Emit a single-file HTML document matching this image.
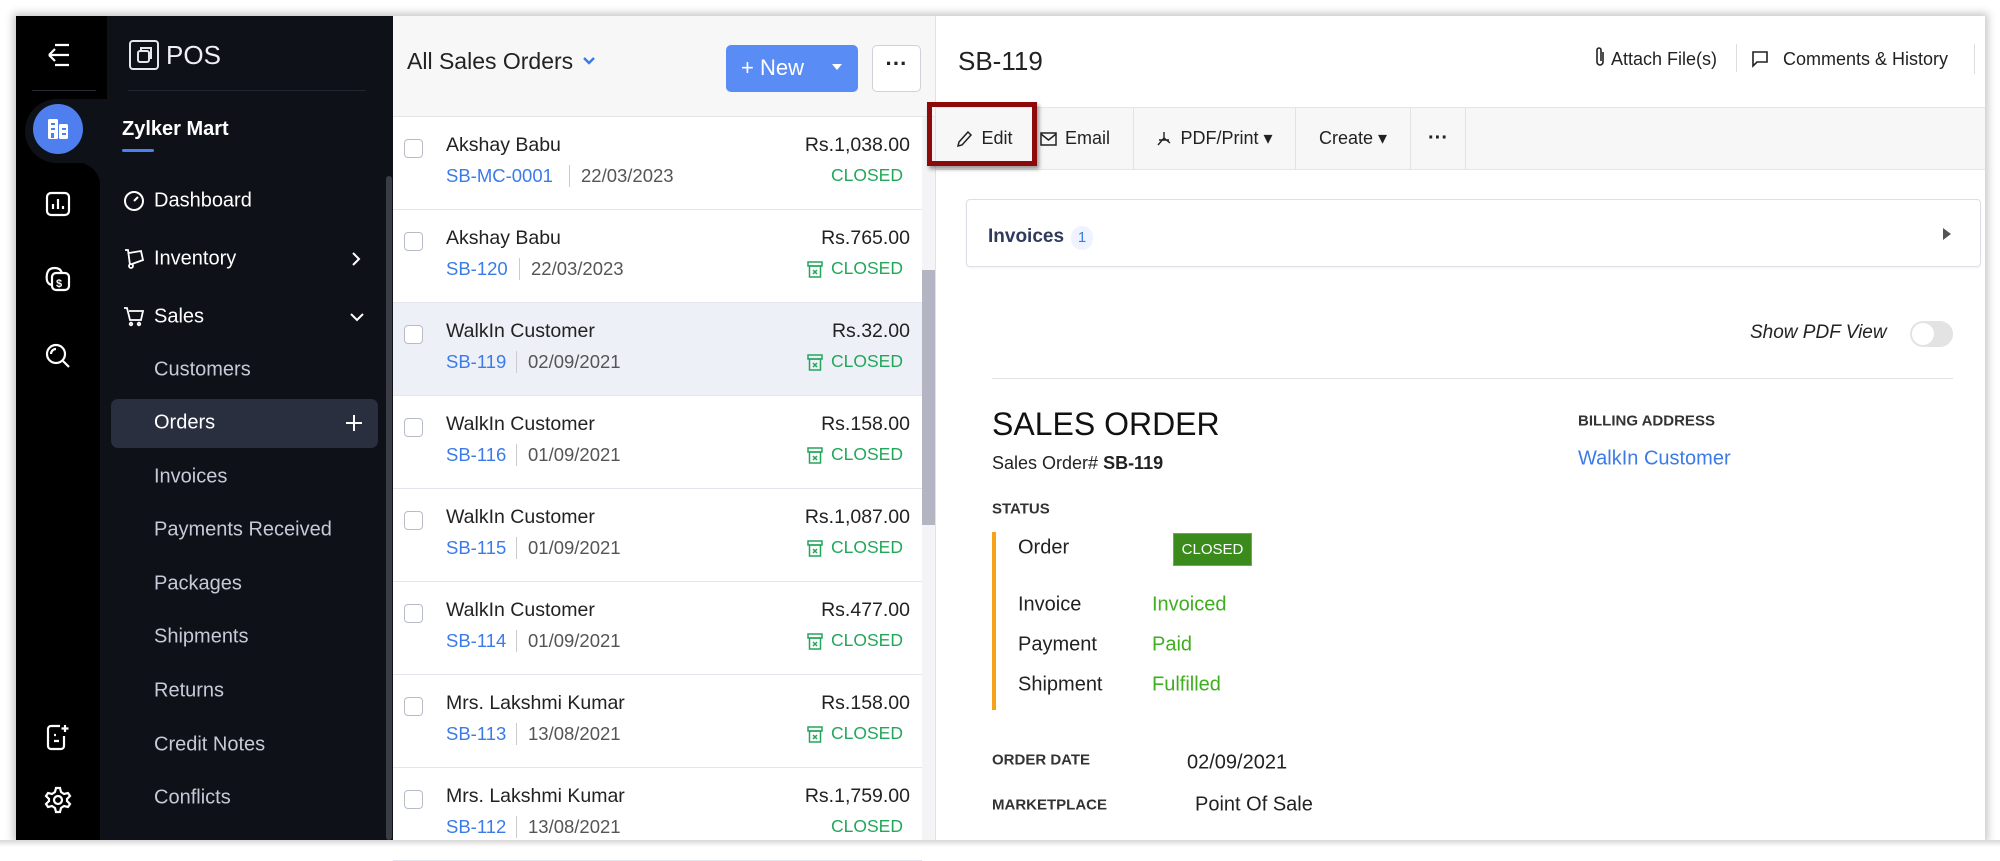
<!DOCTYPE html>
<html><head><meta charset="utf-8"><style>
*{box-sizing:border-box;margin:0;padding:0}
body{width:2000px;height:857px;background:#fff;font-family:"Liberation Sans",sans-serif;position:relative;overflow:hidden}
.a{position:absolute}
#frame{left:16px;top:16px;width:1969px;height:824px;box-shadow:0 0 8px 3px rgba(0,0,0,.22);overflow:hidden;background:#fff}
.nav{color:#c6cad6;font-size:20px;position:absolute;left:154px;transform:translateY(-50%)}
.ri{position:absolute;stroke:#fff;fill:none;stroke-width:2.2}
.row{position:absolute;left:393px;width:529px;height:93px;border-bottom:1px solid #e4e6ee;background:#fff}
.row .cb{position:absolute;left:11px;top:22px;width:19px;height:19px;border:1.5px solid #b8bcc8;border-radius:4px;background:#fff}
.row .nm{position:absolute;left:53px;top:17px;font-size:19.5px;color:#222}
.row .amt{position:absolute;right:12px;top:17px;font-size:19.5px;color:#222}
.row .id{position:absolute;left:53px;top:48px;font-size:18.5px;color:#3b7be8}
.row .dt{position:absolute;top:48px;font-size:18.5px;color:#555;border-left:1px solid #ccc;padding-left:11px;line-height:22px}
.row .st{position:absolute;right:19px;top:48px;font-size:17.5px;color:#22a75a;display:flex;align-items:center;gap:8px}
.tb{position:absolute;top:107px;height:63px;display:flex;align-items:center;font-size:18px;color:#222;border-right:1px solid #e3e3e3}
.lbl{position:absolute;font-size:15px;color:#333;font-weight:bold;transform:translateY(-50%)}
.v{position:absolute;font-size:20px;color:#222;transform:translateY(-50%)}
</style></head><body>
<div id="frame" class="a"></div>
<!-- rail -->
<div class="a" style="left:16px;top:16px;width:84px;height:824px;background:#000"></div>
<div class="a" style="left:100px;top:16px;width:293px;height:824px;background:#0e1118"></div>
<div class="a" style="left:16px;top:16px;width:91px;height:84px;background:#000"></div>
<div class="a" style="left:32px;top:90px;width:64px;height:1px;background:#2a2d35"></div>
<div class="a" style="left:128px;top:90px;width:238px;height:1px;background:#22262f"></div>
<div class="a" style="left:25px;top:99px;width:100px;height:64px;background:#0e1118;border-radius:32px 0 0 32px"></div>
<div class="a" style="left:84px;top:150px;width:16px;height:30px;background:#0e1118"></div>
<div class="a" style="left:16px;top:163px;width:84px;height:40px;background:#000;border-top-right-radius:22px"></div>
<div class="a" style="left:33px;top:104px;width:50px;height:50px;border-radius:50%;background:#4f7fef"></div>
<svg class="a" style="left:43px;top:114px" width="30" height="30" viewBox="0 0 30 30"><rect x="5" y="5" width="10" height="20" rx="1.5" fill="#fff"/><rect x="16" y="10" width="9" height="15" rx="1.5" fill="#fff"/><rect x="8" y="9" width="4" height="2" fill="#4f7fef"/><rect x="8" y="14" width="4" height="2" fill="#4f7fef"/><rect x="8" y="19" width="3" height="5" fill="#4f7fef"/><rect x="19" y="14" width="4" height="2" fill="#4f7fef"/><rect x="19" y="19" width="4" height="2" fill="#4f7fef"/></svg>
<svg class="ri" style="left:46px;top:42px" width="26" height="26" viewBox="0 0 26 26" stroke="#a8adbb" stroke-width="1.8"><path d="M9 3h14M9 23h14M13 13h10M3 13l6-6M3 13l6 6M3 13h10"/></svg>
<svg class="ri" style="left:45px;top:191px" width="26" height="26" viewBox="0 0 26 26"><rect x="2" y="2" width="22" height="22" rx="4"/><path d="M8 18v-5M13 18V8M18 18v-3"/></svg>
<svg class="ri" style="left:44px;top:265px" width="28" height="28" viewBox="0 0 28 28"><rect x="8" y="8" width="17" height="17" rx="4"/><path d="M8 20c-5-1-6-5-5-11 1-4 3-6 8-6 4 0 6 2 7 5"/><text x="12" y="22" font-size="11" fill="#fff" stroke="none" font-family="Liberation Sans" font-weight="bold">$</text></svg>
<svg class="ri" style="left:44px;top:342px" width="28" height="28" viewBox="0 0 28 28"><circle cx="12" cy="12" r="9"/><path d="M19 19l6 6M7 12a5 5 0 0 1 5-5"/></svg>
<svg class="ri" style="left:45px;top:723px" width="26" height="28" viewBox="0 0 26 28"><path d="M15 3H6a3 3 0 0 0-3 3v17a3 3 0 0 0 3 3h10a3 3 0 0 0 3-3V13M9 12h2M9 18h5M20 2v7M16.5 5.5h7"/></svg>
<svg class="ri" style="left:44px;top:786px" width="28" height="28" viewBox="0 0 28 28"><circle cx="14" cy="14" r="4"/><path d="M12 2h4l1 4 3 2 4-1 2 3-3 3v2l3 3-2 3-4-1-3 2-1 4h-4l-1-4-3-2-4 1-2-3 3-3v-2L2 10l2-3 4 1 3-2z"/></svg>
<!-- nav -->
<svg class="a" style="left:128px;top:39px" width="32" height="32" viewBox="0 0 32 32" fill="none" stroke="#e5e7ee" stroke-width="2"><rect x="2" y="2" width="28" height="28" rx="3"/><rect x="10" y="12" width="11" height="11" rx="2"/><path d="M13 12V9h10v10h-2"/></svg>
<div class="a" style="left:166px;top:40px;font-size:26px;color:#eef0f4">POS</div>
<div class="a" style="left:122px;top:118px;font-size:20px;font-weight:bold;color:#fff">Zylker Mart</div>
<div class="a" style="left:122px;top:149px;width:32px;height:3px;background:#4f7fef;border-radius:2px"></div>
<svg class="a" style="left:123px;top:190px" width="22" height="22" viewBox="0 0 22 22" fill="none" stroke="#fff" stroke-width="2"><circle cx="11" cy="11" r="9"/><path d="M11 11l4-4"/></svg>
<div class="nav" style="top:201px;color:#fff">Dashboard</div>
<svg class="a" style="left:123px;top:247px" width="22" height="22" viewBox="0 0 22 22" fill="none" stroke="#fff" stroke-width="1.8"><path d="M2 3h3l2 15M6 6l12-2 2 9-11 4"/><circle cx="8" cy="19" r="2"/></svg>
<div class="nav" style="top:259px;color:#fff">Inventory</div>
<svg class="a" style="left:349px;top:250px" width="14" height="18" viewBox="0 0 14 18" fill="none" stroke="#fff" stroke-width="2"><path d="M4 3l6 6-6 6"/></svg>
<svg class="a" style="left:123px;top:305px" width="22" height="22" viewBox="0 0 22 22" fill="none" stroke="#fff" stroke-width="1.8"><path d="M1 3h3l3 12h11l2-9H6"/><circle cx="8" cy="19" r="1.3"/><circle cx="16" cy="19" r="1.3"/></svg>
<div class="nav" style="top:317px;color:#fff">Sales</div>
<svg class="a" style="left:348px;top:310px" width="18" height="14" viewBox="0 0 18 14" fill="none" stroke="#fff" stroke-width="2"><path d="M3 4l6 6 6-6"/></svg>
<div class="nav" style="top:370px">Customers</div>
<div class="a" style="left:111px;top:399px;width:267px;height:49px;background:#2a2f3f;border-radius:7px"></div>
<div class="nav" style="top:423px;color:#fff">Orders</div>
<svg class="a" style="left:345px;top:414px" width="18" height="18" viewBox="0 0 18 18" stroke="#fff" stroke-width="2"><path d="M9 1v16M1 9h16"/></svg>
<div class="nav" style="top:477px">Invoices</div>
<div class="nav" style="top:530px">Payments Received</div>
<div class="nav" style="top:584px">Packages</div>
<div class="nav" style="top:637px">Shipments</div>
<div class="nav" style="top:691px">Returns</div>
<div class="nav" style="top:745px">Credit Notes</div>
<div class="nav" style="top:798px">Conflicts</div>
<div class="a" style="left:386px;top:176px;width:6px;height:664px;background:#3a3d45;border-radius:3px"></div>
<!-- list -->
<div class="a" style="left:393px;top:16px;width:542px;height:101px;background:#f7f7f7;border-bottom:1px solid #e6e6e6;box-shadow:0 2px 3px rgba(0,0,0,.05)"></div>
<div class="a" style="left:407px;top:48px;font-size:23px;color:#222">All Sales Orders</div>
<svg class="a" style="left:582px;top:56px" width="14" height="10" viewBox="0 0 14 10" fill="none" stroke="#3b7be8" stroke-width="2.4"><path d="M2 2l5 5 5-5"/></svg>
<div class="a" style="left:726px;top:45px;width:132px;height:47px;background:#5a8cf5;border-radius:5px"></div>
<div class="a" style="left:741px;top:55px;font-size:22px;color:#fff">+ New</div>
<svg class="a" style="left:831px;top:63px" width="12" height="8" viewBox="0 0 12 8"><path d="M1 1h10L6 7z" fill="#fff"/></svg>
<div class="a" style="left:872px;top:45px;width:49px;height:47px;background:#fff;border:1px solid #cfd2d8;border-radius:5px;font-size:22px;font-weight:bold;text-align:center;line-height:36px;color:#222">···</div>
<div class="a" style="left:922px;top:117px;width:13px;height:723px;background:#f4f4f6"></div>
<div class="a" style="left:922px;top:270px;width:13px;height:255px;background:#b4b5c2"></div>

<div class="row" style="top:117px"><div class="cb"></div><div class="nm">Akshay Babu</div><div class="amt">Rs.1,038.00</div><div class="id">SB-MC-0001</div><div class="dt" style="left:176px">22/03/2023</div><div class="st">CLOSED</div></div>
<div class="row" style="top:210px"><div class="cb"></div><div class="nm">Akshay Babu</div><div class="amt">Rs.765.00</div><div class="id">SB-120</div><div class="dt" style="left:126px">22/03/2023</div><div class="st"><svg width="16" height="18" viewBox="0 0 16 18" fill="none" stroke="#22a75a" stroke-width="1.5"><rect x="1" y="2" width="14" height="4"/><rect x="2.5" y="6" width="11" height="11"/><path d="M6 10l4 4M10 10l-4 4"/></svg>CLOSED</div></div>
<div class="row" style="top:303px;background:#eef0f8"><div class="cb"></div><div class="nm">WalkIn Customer</div><div class="amt">Rs.32.00</div><div class="id">SB-119</div><div class="dt" style="left:123px">02/09/2021</div><div class="st"><svg width="16" height="18" viewBox="0 0 16 18" fill="none" stroke="#22a75a" stroke-width="1.5"><rect x="1" y="2" width="14" height="4"/><rect x="2.5" y="6" width="11" height="11"/><path d="M6 10l4 4M10 10l-4 4"/></svg>CLOSED</div></div>
<div class="row" style="top:396px"><div class="cb"></div><div class="nm">WalkIn Customer</div><div class="amt">Rs.158.00</div><div class="id">SB-116</div><div class="dt" style="left:123px">01/09/2021</div><div class="st"><svg width="16" height="18" viewBox="0 0 16 18" fill="none" stroke="#22a75a" stroke-width="1.5"><rect x="1" y="2" width="14" height="4"/><rect x="2.5" y="6" width="11" height="11"/><path d="M6 10l4 4M10 10l-4 4"/></svg>CLOSED</div></div>
<div class="row" style="top:489px"><div class="cb"></div><div class="nm">WalkIn Customer</div><div class="amt">Rs.1,087.00</div><div class="id">SB-115</div><div class="dt" style="left:123px">01/09/2021</div><div class="st"><svg width="16" height="18" viewBox="0 0 16 18" fill="none" stroke="#22a75a" stroke-width="1.5"><rect x="1" y="2" width="14" height="4"/><rect x="2.5" y="6" width="11" height="11"/><path d="M6 10l4 4M10 10l-4 4"/></svg>CLOSED</div></div>
<div class="row" style="top:582px"><div class="cb"></div><div class="nm">WalkIn Customer</div><div class="amt">Rs.477.00</div><div class="id">SB-114</div><div class="dt" style="left:123px">01/09/2021</div><div class="st"><svg width="16" height="18" viewBox="0 0 16 18" fill="none" stroke="#22a75a" stroke-width="1.5"><rect x="1" y="2" width="14" height="4"/><rect x="2.5" y="6" width="11" height="11"/><path d="M6 10l4 4M10 10l-4 4"/></svg>CLOSED</div></div>
<div class="row" style="top:675px"><div class="cb"></div><div class="nm">Mrs. Lakshmi Kumar</div><div class="amt">Rs.158.00</div><div class="id">SB-113</div><div class="dt" style="left:123px">13/08/2021</div><div class="st"><svg width="16" height="18" viewBox="0 0 16 18" fill="none" stroke="#22a75a" stroke-width="1.5"><rect x="1" y="2" width="14" height="4"/><rect x="2.5" y="6" width="11" height="11"/><path d="M6 10l4 4M10 10l-4 4"/></svg>CLOSED</div></div>
<div class="row" style="top:768px"><div class="cb"></div><div class="nm">Mrs. Lakshmi Kumar</div><div class="amt">Rs.1,759.00</div><div class="id">SB-112</div><div class="dt" style="left:123px">13/08/2021</div><div class="st">CLOSED</div></div>
<div class="a" style="left:935px;top:16px;width:1px;height:824px;background:#e2e2e2"></div>
<!-- detail -->
<div class="a" style="left:958px;top:46px;font-size:26px;color:#222">SB-119</div>
<svg class="a" style="left:1594px;top:46px" width="12" height="22" viewBox="0 0 12 22" fill="none" stroke="#222" stroke-width="1.6"><path d="M9 6v10a3 3 0 0 1-6 0V4a2 2 0 0 1 4 0v11"/></svg>
<div class="a" style="left:1611px;top:49px;font-size:18px;color:#222">Attach File(s)</div>
<div class="a" style="left:1736px;top:44px;width:1px;height:28px;background:#ddd"></div>
<svg class="a" style="left:1751px;top:50px" width="18" height="18" viewBox="0 0 18 18" fill="none" stroke="#222" stroke-width="1.6"><path d="M2 2h14v10H6l-4 4z"/></svg>
<div class="a" style="left:1783px;top:49px;font-size:18px;color:#222">Comments &amp; History</div>
<div class="a" style="left:1974px;top:44px;width:1px;height:30px;background:#ddd"></div>
<div class="a" style="left:936px;top:107px;width:1049px;height:63px;background:#f7f7f7;border-top:1px solid #e6e6e6;border-bottom:1px solid #e6e6e6"></div>
<div class="tb" style="left:937px;width:96px;justify-content:center;gap:8px;border:none"><svg width="16" height="18" viewBox="0 0 16 18" fill="none" stroke="#222" stroke-width="1.5"><path d="M11 2l3 3-9 10-4 1 1-4z"/></svg>Edit</div>
<div class="tb" style="left:1040px;width:94px;gap:8px"><svg width="17" height="14" viewBox="0 0 17 14" fill="none" stroke="#222" stroke-width="1.5"><rect x="1" y="1" width="15" height="12"/><path d="M1 2l7.5 6L16 2"/></svg>Email</div>
<div class="tb" style="left:1134px;width:162px;justify-content:center;gap:8px"><svg width="16" height="16" viewBox="0 0 16 16" fill="none" stroke="#222" stroke-width="1.4"><path d="M8 1v6l-6 7M8 7l6 5M3 9h10"/></svg>PDF/Print ▾</div>
<div class="tb" style="left:1296px;width:115px;justify-content:center">Create ▾</div>
<div class="tb" style="left:1411px;width:55px;justify-content:center;font-weight:bold;font-size:20px">···</div>
<div class="a" style="left:927px;top:102px;width:110px;height:64px;border:5px solid #8c0a0a;box-shadow:2px 3px 4px rgba(0,0,0,.4)"></div>
<div class="a" style="left:966px;top:199px;width:1015px;height:68px;border:1px solid #dcdfe5;border-radius:4px;box-shadow:0 1px 2px rgba(0,0,0,.06)"></div>
<div class="a" style="left:988px;top:226px;font-size:19px;color:#2f3a5c;font-weight:bold">Invoices</div>
<div class="a" style="left:1071px;top:226px;width:22px;height:24px;border-radius:11px;background:#eef3ff;color:#3b7be8;font-size:15px;text-align:center;line-height:24px">1</div>
<svg class="a" style="left:1942px;top:227px" width="10" height="14" viewBox="0 0 10 14"><path d="M1 1l8 6-8 6z" fill="#555"/></svg>
<div class="a" style="left:1750px;top:322px;font-size:19px;color:#222;font-style:italic">Show PDF View</div>
<div class="a" style="left:1910px;top:321px;width:43px;height:26px;border-radius:13px;background:#e3e3e3"></div>
<div class="a" style="left:1912px;top:323px;width:22px;height:22px;border-radius:50%;background:#fff"></div>
<div class="a" style="left:992px;top:378px;width:961px;height:1px;background:#e2e2e2"></div>
<div class="a" style="left:992px;top:406px;font-size:32px;color:#111">SALES ORDER</div>
<div class="a" style="left:992px;top:453px;font-size:18px;color:#222">Sales Order# <b>SB-119</b></div>
<div class="lbl" style="left:1578px;top:421px">BILLING ADDRESS</div>
<div class="v" style="left:1578px;top:459px;color:#3b7be8">WalkIn Customer</div>
<div class="lbl" style="left:992px;top:509px">STATUS</div>
<div class="a" style="left:992px;top:532px;width:4px;height:178px;background:#f7a21b"></div>
<div class="v" style="left:1018px;top:548px">Order</div>
<div class="a" style="left:1173px;top:533px;width:79px;height:33px;background:#3a8a1c;border:1px solid #5db83a;color:#fff;font-size:15px;text-align:center;line-height:31px">CLOSED</div>
<div class="v" style="left:1018px;top:605px">Invoice</div><div class="v" style="left:1152px;top:605px;color:#3fae1f">Invoiced</div>
<div class="v" style="left:1018px;top:645px">Payment</div><div class="v" style="left:1152px;top:645px;color:#3fae1f">Paid</div>
<div class="v" style="left:1018px;top:685px">Shipment</div><div class="v" style="left:1152px;top:685px;color:#3fae1f">Fulfilled</div>
<div class="lbl" style="left:992px;top:760px">ORDER DATE</div><div class="v" style="left:1187px;top:763px">02/09/2021</div>
<div class="lbl" style="left:992px;top:805px">MARKETPLACE</div><div class="v" style="left:1195px;top:805px">Point Of Sale</div>
<div class="a" style="left:0;top:840px;width:2000px;height:17px;background:linear-gradient(#d8d8d8,#fff 7px)"></div>
</body></html>
